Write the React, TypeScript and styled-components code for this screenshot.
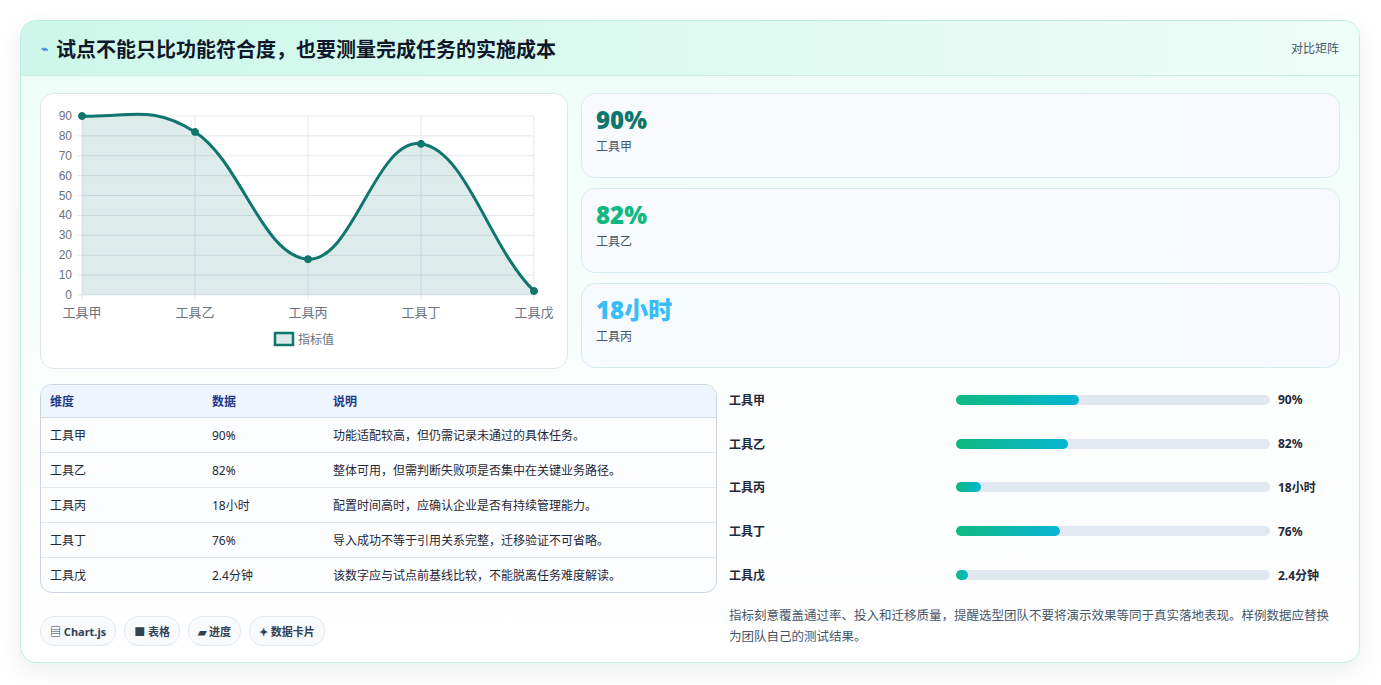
import React from "react";
import styled, { createGlobalStyle } from "styled-components";

const G = createGlobalStyle`
  body { margin: 0; background: #fff; font-family: "Noto Sans", "Noto Sans CJK SC", sans-serif; }
`;
const Page = styled.div`padding: 20px 21px 22px 20px;`;
const Card = styled.div`
  border: 1px solid #bdeee0; border-radius: 16px; overflow: hidden;
  background: linear-gradient(180deg, #ecfdf7 0%, #fbfefd 60%, #fff 100%);
  box-shadow: 0 8px 24px rgba(15,23,42,0.08);
  height: 643px; box-sizing: border-box;
`;
const Header = styled.div`
  height: 55px; box-sizing: border-box; display: flex; align-items: center; justify-content: space-between;
  padding: 0 20px; background: linear-gradient(90deg, #cdf7ea, #e3fbf3 70%, #eefdf8);
  border-bottom: 1px solid #c9efe3;
`;
const Title = styled.div`display: flex; align-items: center; gap: 8px; font-size: 20px; font-weight: 700; color: #0f172a;`;
const Bolt = styled.span`color: #3b82f6; font-size: 12px;`;
const HeadLink = styled.span`font-size: 12px; color: #475569;`;
const Body = styled.div`padding: 17px 19px; display: flex; flex-direction: column; gap: 15px;`;
const Top = styled.div`display: grid; grid-template-columns: 528px 1fr; gap: 13px;`;
const Panel = styled.div`
  background: #fff; border: 1px solid #dde7ee; border-radius: 14px; height: 276px; box-sizing: border-box; position: relative;
`;
const Stats = styled.div`display: flex; flex-direction: column; gap: 10px;`;
const Stat = styled.div`
  height: 85px; box-sizing: border-box; border: 1px solid #d6ebf0; border-radius: 14px;
  background: linear-gradient(90deg, #f7fbfd, #f8f9fe); padding: 10px 14px;
`;
const StatVal = styled.div<{ c: string }>`font-size: 24px; font-weight: 900; color: ${p => p.c}; line-height: 32px;`;
const StatLbl = styled.div`font-size: 12px; color: #475569; margin-top: 1px;`;
const Bottom = styled.div`display: grid; grid-template-columns: 677px 1fr; gap: 12px;`;
const Left = styled.div`display: flex; flex-direction: column; gap: 23px;`;
const Table = styled.table`
  width: 100%; border-collapse: separate; border-spacing: 0; border: 1px solid #cbd5e1; border-radius: 12px; overflow: hidden;
  font-size: 12px; background: #fcfdfe;
  th { background: #eef5fe; color: #1e3a8a; font-weight: 700; text-align: left; height: 32px; padding: 0 9px; border-bottom: 1px solid #cfdbe8; }
  td { height: 34px; padding: 0 9px; color: #1e293b; border-bottom: 1px solid #e2e8f0; }
  tr:last-child td { border-bottom: none; }
`;
const Tags = styled.div`display: flex; gap: 8px;`;
const Tag = styled.span`
  font-size: 11px; font-weight: 700; color: #334155; border: 1px solid #e2e8f0; background: #f8fafc;
  border-radius: 14px; padding: 6px 9px;
`;
const Right = styled.div`display: flex; flex-direction: column; margin-top: -6px;`;
const BarRow = styled.div`display: grid; grid-template-columns: 227px 314px 1fr; align-items: center; height: 43.8px; font-size: 12px; font-weight: 700; color: #1e293b;`;
const Track = styled.div`height: 10px; border-radius: 5px; background: #e2e8f0;`;
const Fill = styled.div`height: 10px; border-radius: 5px; background: linear-gradient(90deg, #10b981, #06b6d4);`;
const Val = styled.span`padding-left: 8px;`;
const Note = styled.p`margin: 8px 0 0; font-size: 12.5px; line-height: 21px; color: #475569;`;

const rows = [
  ["工具甲", "90%", "功能适配较高，但仍需记录未通过的具体任务。", 123],
  ["工具乙", "82%", "整体可用，但需判断失败项是否集中在关键业务路径。", 112],
  ["工具丙", "18小时", "配置时间高时，应确认企业是否有持续管理能力。", 25],
  ["工具丁", "76%", "导入成功不等于引用关系完整，迁移验证不可省略。", 104],
  ["工具戊", "2.4分钟", "该数字应与试点前基线比较，不能脱离任务难度解读。", 12],
] as const;

function Chart() {
  const x0 = 41, x1 = 493, yT = 22, yB = 201;
  const vals = [90, 82, 18, 76, 2];
  const xs = vals.map((_, i) => x0 + (x1 - x0) * i / 4);
  const ys = vals.map(v => yB - (yB - yT) * v / 90);
  const slope = (i: number) =>
    i === 0 ? (ys[1] - ys[0]) * 0.15 : i === 4 ? (ys[4] - ys[3]) * 0.3 : (ys[i + 1] - ys[i - 1]) * 0.2;
  let d = `M${xs[0]},${ys[0]}`;
  for (let i = 0; i < 4; i++) {
    const dx = (xs[i + 1] - xs[i]) * 0.4;
    d += ` C${xs[i] + dx},${ys[i] + slope(i)} ${xs[i + 1] - dx},${ys[i + 1] - slope(i + 1)} ${xs[i + 1]},${ys[i + 1]}`;
  }
  const labels = ["工具甲", "工具乙", "工具丙", "工具丁", "工具戊"];
  return (
    <svg width="526" height="274" style={{ display: "block" }} fontFamily="Liberation Sans, Noto Sans CJK SC, sans-serif">
      {Array.from({ length: 10 }, (_, k) => {
        const y = yB - (yB - yT) * k / 9;
        return <g key={k}><line x1={x0 - 5} x2={x1} y1={y} y2={y} stroke="#e3e8ee" /><text x={x0 - 10} y={y + 4} fontSize="12" fill="#6b7280" textAnchor="end">{k * 10}</text></g>;
      })}
      {xs.map((x, i) => <g key={i}><line x1={x} x2={x} y1={yT} y2={yB + 5} stroke="#e3e8ee" /><text x={x} y={223} fontSize="13" fill="#6b7280" textAnchor="middle">{labels[i]}</text></g>)}
      <path d={`${d} L${x1},${yB} L${x0},${yB} Z`} fill="rgba(15,118,110,0.14)" />
      <path d={d} fill="none" stroke="#0f766e" strokeWidth="3" />
      {xs.map((x, i) => <circle key={i} cx={x} cy={ys[i]} r="3.5" fill="#0f766e" stroke="#0f766e" strokeWidth="1" />)}
      <rect x="234" y="239" width="18" height="12" fill="#dbe9e8" stroke="#0f766e" strokeWidth="2.5" />
      <text x="257" y="249.5" fontSize="12" fill="#6b7280">指标值</text>
    </svg>
  );
}

export default function App() {
  return (
    <Page>
      <G />
      <Card>
        <Header>
          <Title><Bolt>⌁</Bolt>试点不能只比功能符合度，也要测量完成任务的实施成本</Title>
          <HeadLink>对比矩阵</HeadLink>
        </Header>
        <Body>
          <Top>
            <Panel><Chart /></Panel>
            <Stats>
              <Stat><StatVal c="#0f766e">90%</StatVal><StatLbl>工具甲</StatLbl></Stat>
              <Stat><StatVal c="#10b981">82%</StatVal><StatLbl>工具乙</StatLbl></Stat>
              <Stat><StatVal c="#38bdf8">18小时</StatVal><StatLbl>工具丙</StatLbl></Stat>
            </Stats>
          </Top>
          <Bottom>
            <Left>
              <Table>
                <thead><tr><th style={{ width: 144 }}>维度</th><th style={{ width: 103 }}>数据</th><th>说明</th></tr></thead>
                <tbody>{rows.map(r => <tr key={r[0]}><td>{r[0]}</td><td>{r[1]}</td><td>{r[2]}</td></tr>)}</tbody>
              </Table>
              <Tags><Tag>▤ Chart.js</Tag><Tag>■ 表格</Tag><Tag>▰ 进度</Tag><Tag>✦ 数据卡片</Tag></Tags>
            </Left>
            <Right>
              {rows.map(r => (
                <BarRow key={r[0]}>
                  <span>{r[0]}</span>
                  <Track><Fill style={{ width: r[3] }} /></Track>
                  <Val>{r[1]}</Val>
                </BarRow>
              ))}
              <Note>指标刻意覆盖通过率、投入和迁移质量，提醒选型团队不要将演示效果等同于真实落地表现。样例数据应替换为团队自己的测试结果。</Note>
            </Right>
          </Bottom>
        </Body>
      </Card>
    </Page>
  );
}
